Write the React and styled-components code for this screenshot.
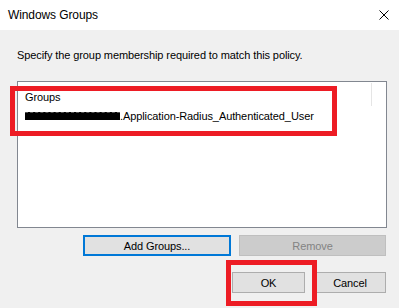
import React from "react";
import styled, { createGlobalStyle } from "styled-components";

const Global = createGlobalStyle`
  html, body { margin: 0; padding: 0; background: #f0f0f0; }
  * { box-sizing: border-box; }
`;

const Window = styled.div`
  position: relative;
  width: 399px;
  height: 308px;
  background: #f0f0f0;
  font-family: "Liberation Sans", Arial, sans-serif;
  font-size: 11px;
  letter-spacing: -0.1px;
  color: #000;
  overflow: hidden;
`;

const TitleBar = styled.div`
  height: 30px;
  background: #fff;
  display: flex;
  align-items: center;
  justify-content: space-between;
  padding: 0 10px 0 8px;
`;

const Title = styled.span`
  font-size: 12px;
  letter-spacing: -0.1px;
  line-height: 15px;
`;

const CloseIcon = styled.svg`
  width: 10px;
  height: 10px;
  margin-top: -1px;
`;

const Body = styled.div`
  padding: 18px 12px 0 17px;
  display: flex;
  flex-direction: column;
`;

const Instruction = styled.div`
  line-height: 14px;
  height: 14px;
`;

const ListBox = styled.div`
  margin-top: 19px;
  width: 370px;
  height: 147px;
  background: #fff;
  border: 1px solid #828790;
  display: flex;
  flex-direction: column;
`;

const HeaderRow = styled.div`
  display: flex;
  height: 24px;
  padding-top: 1px;
`;

const HeaderCell = styled.div`
  width: 354px;
  height: 23px;
  padding: 8px 0 0 7px;
  line-height: 12px;
  border-right: 1px solid #e5e5e5;
`;

const ItemRow = styled.div`
  display: flex;
  align-items: center;
  height: 16px;
  padding-left: 7px;
  margin-top: 2px;
  line-height: 15px;
`;

const Redacted = styled.span`
  display: inline-block;
  width: 95px;
  height: 8px;
  background: #000;
  border-top: 1px dashed #555;
  margin-bottom: 1px;
`;

const ButtonRow = styled.div`
  display: flex;
  justify-content: flex-end;
  gap: ${(p) => p.$gap}px;
  margin-top: ${(p) => p.$top}px;
  padding-right: 1px;
`;

const Button = styled.div`
  width: ${(p) => p.$w}px;
  height: 21px;
  display: flex;
  align-items: center;
  justify-content: center;
  font-size: 11px;
  background: ${(p) => (p.$disabled ? "#cccccc" : "#e1e1e1")};
  color: ${(p) => (p.$disabled ? "#838383" : "#000")};
  border: ${(p) =>
    p.$focused ? "2px solid #0078d7" : p.$disabled ? "1px solid #bfbfbf" : "1px solid #adadad"};
`;

const Highlight = styled.div`
  position: absolute;
  left: ${(p) => p.$x}px;
  top: ${(p) => p.$y}px;
  width: ${(p) => p.$w}px;
  height: ${(p) => p.$h}px;
  border: 5px solid #ed1c24;
  pointer-events: none;
`;

export default function App() {
  return (
    <>
      <Global />
      <Window>
        <TitleBar>
          <Title>Windows Groups</Title>
          <CloseIcon viewBox="0 0 10 10">
            <path d="M0.5 0.5 L9.5 9.5 M9.5 0.5 L0.5 9.5" stroke="#000" strokeWidth="1" fill="none" />
          </CloseIcon>
        </TitleBar>
        <Body>
          <Instruction>Specify the group membership required to match this policy.</Instruction>
          <ListBox>
            <HeaderRow>
              <HeaderCell>Groups</HeaderCell>
            </HeaderRow>
            <ItemRow>
              <Redacted />
              <span>.Application-Radius_Authenticated_User</span>
            </ItemRow>
          </ListBox>
          <ButtonRow $gap={8} $top={7}>
            <Button $w={148} $focused>Add Groups...</Button>
            <Button $w={147} $disabled>Remove</Button>
          </ButtonRow>
          <ButtonRow $gap={9} $top={16}>
            <Button $w={73}>OK</Button>
            <Button $w={72}>Cancel</Button>
          </ButtonRow>
        </Body>
        <Highlight $x={10} $y={86} $w={327} $h={50} />
        <Highlight $x={226} $y={260} $w={91} $h={46} />
      </Window>
    </>
  );
}
